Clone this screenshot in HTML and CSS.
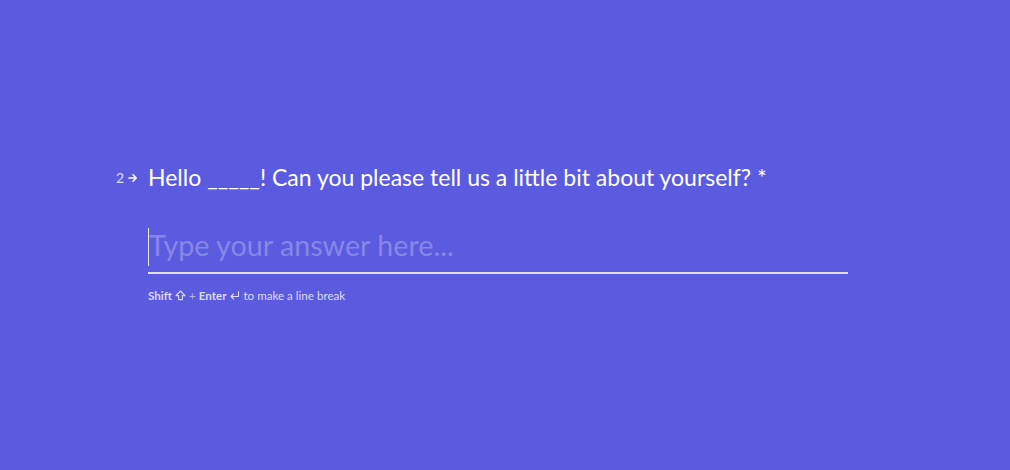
FILE: index.html
```html
<!DOCTYPE html>
<html>
<head>
<meta charset="utf-8">
<link rel="stylesheet" href="styles.css">
</head>
<body>
<main class="page">
  <section class="question">
    <div class="q-head">
      <div class="q-index">
        <span class="q-num">2</span>
        <svg class="q-arrow" width="10" height="10" viewBox="0 0 10 10"><path d="M1 5H8M5 1.8L8.2 5L5 8.2" fill="none" stroke="#fff" stroke-width="1.6" stroke-linecap="round" stroke-linejoin="round"/></svg>
      </div>
      <h1 class="q-title">Hello _____! Can you please tell us a little bit about yourself? *</h1>
    </div>
    <div class="answer">
      <span class="caret"></span>
      <span class="placeholder">Type your answer here...</span>
    </div>
    <p class="hint"><b>Shift</b> <svg class="k-icon" width="11" height="11" viewBox="0 0 11 11"><path d="M5.5 1L10 5.6H7.4V9.6H3.6V5.6H1Z" fill="none" stroke="#dcdcf8" stroke-width="1.1" stroke-linejoin="round"/></svg> <span class="plus">+</span> <b>Enter</b> <svg class="k-icon" width="11" height="11" viewBox="0 0 11 11"><path d="M9.5 1.5V6.5H2M4.5 4L2 6.5L4.5 9" fill="none" stroke="#dcdcf8" stroke-width="1.1" stroke-linejoin="round" stroke-linecap="round"/></svg> to make a line break</p>
  </section>
</main>
</body>
</html>
```
FILE: styles.css
```css
html, body {
  margin: 0;
  padding: 0;
  width: 1010px;
  height: 470px;
  background: #5b5be0;
  font-family: "Lato", "Liberation Sans", sans-serif;
  color: #ffffff;
  overflow: hidden;
}
.page {
  display: flex;
  justify-content: center;
  padding-top: 161px;
  padding-right: 14px;
}
.question {
  width: 700px;
  display: flex;
  flex-direction: column;
}
.q-head {
  position: relative;
}
.q-index {
  position: absolute;
  left: -32px;
  top: 8px;
  display: flex;
  align-items: center;
  gap: 4px;
  color: #dcdcf8;
  font-size: 14px;
}
.q-arrow { display: block; }
.q-title {
  margin: 0;
  font-size: 23px;
  font-weight: 400;
  line-height: 32px;
}
.answer {
  margin-top: 33px;
  height: 46px;
  border-bottom: 2px solid #e0e0f8;
  display: flex;
  align-items: flex-start;
  position: relative;
}
.caret {
  position: absolute;
  left: 0;
  top: 2px;
  width: 1px;
  height: 38px;
  background: #e8e8fa;
}
.placeholder {
  font-size: 28.7px;
  line-height: 38px;
  color: #8787e9;
  padding-left: 1px;
}
.hint {
  margin: 15px 0 0;
  font-size: 11.6px;
  color: #dcdcf8;
  display: flex;
  align-items: center;
  gap: 3px;
}
.hint b { font-weight: 700; }
.plus { color: #b4b4f0; }
.k-icon { display: block; }
```
